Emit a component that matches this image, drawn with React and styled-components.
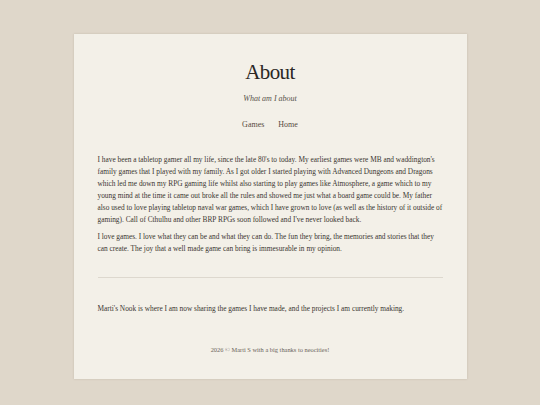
import styled, { createGlobalStyle } from 'styled-components';

const GlobalStyle = createGlobalStyle`
  html, body {
    margin: 0;
    padding: 0;
    background: #dfd7ca;
  }
  body {
    font-family: "Liberation Serif", "Times New Roman", serif;
    color: #3b3631;
  }
`;

const Page = styled.div`
  padding: 34px 0 27px;
`;

const Card = styled.main`
  width: 393px;
  margin: 0 auto;
  box-sizing: border-box;
  background: #f3f0e8;
  box-shadow: 0 0 2px rgba(120, 100, 80, 0.25);
  padding: 26px 24px 25px;
`;

const Header = styled.header`
  text-align: center;
`;

const Title = styled.h1`
  font-size: 21px;
  font-weight: normal;
  letter-spacing: -0.6px;
  margin: 0;
  line-height: 24px;
  color: #2b2724;
`;

const Subtitle = styled.p`
  font-style: italic;
  font-size: 8px;
  line-height: 10px;
  color: #57504a;
  margin: 10px 0 0;
`;

const Nav = styled.nav`
  display: flex;
  justify-content: center;
  gap: 14px;
  margin-top: 16px;
  line-height: 10px;

  a {
    font-size: 8px;
    color: #574a3e;
    text-decoration: none;
  }
`;

const Body = styled.section`
  margin-top: 24px;
`;

const Para = styled.p`
  font-size: 7.35px;
  line-height: 12px;
  margin: 0 0 5px;
  white-space: nowrap;
`;

const Rule = styled.hr`
  border: 0;
  border-top: 1px solid #ddd8ce;
  margin: 22px 0 25px;
`;

const Footer = styled.footer`
  text-align: center;
  font-size: 6.4px;
  line-height: 8px;
  color: #6b635a;
  margin-top: 31px;
`;

export default function App() {
  return (
    <>
      <GlobalStyle />
      <Page>
        <Card>
          <Header>
            <Title>About</Title>
            <Subtitle>What am I about</Subtitle>
            <Nav>
              <a href="#games">Games</a>
              <a href="#home">Home</a>
            </Nav>
          </Header>
          <Body>
            <Para>
              I have been a tabletop gamer all my life, since the late 80's to today. My earliest games were MB and waddington's<br />
              family games that I played with my family. As I got older I started playing with Advanced Dungeons and Dragons<br />
              which led me down my RPG gaming life whilst also starting to play games like Atmosphere, a game which to my<br />
              young mind at the time it came out broke all the rules and showed me just what a board game could be. My father<br />
              also used to love playing tabletop naval war games, which I have grown to love (as well as the history of it outside of<br />
              gaming). Call of Cthulhu and other BRP RPGs soon followed and I've never looked back.
            </Para>
            <Para>
              I love games. I love what they can be and what they can do. The fun they bring, the memories and stories that they<br />
              can create. The joy that a well made game can bring is immesurable in my opinion.
            </Para>
            <Rule />
            <Para>
              Marti's Nook is where I am now sharing the games I have made, and the projects I am currently making.
            </Para>
          </Body>
          <Footer>2026 © Marti S with a big thanks to neocities!</Footer>
        </Card>
      </Page>
    </>
  );
}
